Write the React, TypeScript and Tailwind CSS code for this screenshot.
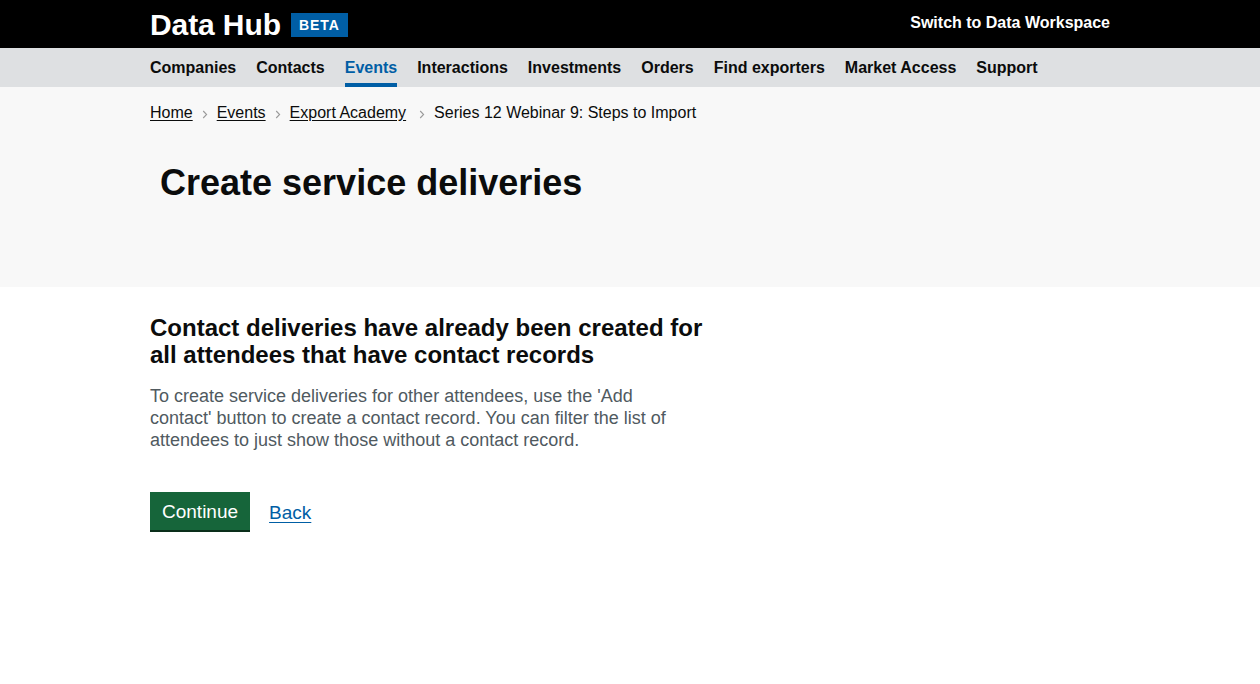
import React from "react";

const Chevron = () => (
  <svg width="6" height="9" viewBox="0 0 6 9" className="mx-[9px] mt-[2px]" aria-hidden>
    <path d="M1.2 1 L4.6 4.5 L1.2 8" fill="none" stroke="#9a9a9a" strokeWidth="1.1" />
  </svg>
);

export default function App() {
  const nav = ["Companies", "Contacts", "Events", "Interactions", "Investments", "Orders", "Find exporters", "Market Access", "Support"];
  return (
    <div className="min-h-[684px] bg-white text-[#0b0c0c]" style={{ fontFamily: '"Liberation Sans", Arial, sans-serif' }}>
      <header className="bg-black h-[48px]">
        <div className="mx-auto w-[960px] h-full flex items-center justify-between">
          <div className="flex items-center gap-[10px] mt-[1px]">
            <span className="text-white font-bold text-[30px] leading-none tracking-[-0.1px]">Data Hub</span>
            <span className="bg-[#005ea5] text-white font-bold text-[14px] leading-none tracking-[1px] px-[8px] pt-[5px] pb-[5px] h-[24px] flex items-center">BETA</span>
          </div>
          <a className="text-white font-bold text-[16px] leading-none mb-[3px]">Switch to Data Workspace</a>
        </div>
      </header>
      <nav className="bg-[#dee0e2] h-[39px]">
        <div className="mx-auto w-[960px] h-full flex gap-[20px]">
          {nav.map((n) => (
            <a
              key={n}
              className={
                n === "Events"
                  ? "text-[#005ea5] font-bold text-[16px] leading-none pt-[12px] h-full border-b-[4px] border-[#005ea5]"
                  : "text-[#0b0c0c] font-bold text-[16px] leading-none pt-[12px] h-full"
              }
            >
              {n}
            </a>
          ))}
        </div>
      </nav>
      <section className="bg-[#f8f8f8] h-[200px]">
        <div className="mx-auto w-[960px]">
          <div className="flex items-center pt-[16px] text-[16px] leading-[20px]">
            <a className="underline underline-offset-[2px]">Home</a>
            <Chevron />
            <a className="underline underline-offset-[2px]">Events</a>
            <Chevron />
            <a className="underline underline-offset-[2px]">Export Academy</a>
            <span className="ml-[4px]"><Chevron /></span>
            <span>Series 12 Webinar 9: Steps to Import</span>
          </div>
          <h1 className="pl-[10px] mt-[40px] font-bold text-[36px] leading-[40px]">Create service deliveries</h1>
        </div>
      </section>
      <main className="mx-auto w-[960px] pt-[27px]">
        <h2 className="w-[565px] font-bold text-[24px] leading-[27px]">Contact deliveries have already been created for all attendees that have contact records</h2>
        <p className="w-[540px] mt-[17px] text-[18px] leading-[22px] text-[#505a5f]">
          To create service deliveries for other attendees, use the 'Add contact' button to create a contact record. You can filter the list of attendees to just show those without a contact record.
        </p>
        <div className="flex items-center gap-[19px] mt-[41px]">
          <button className="bg-[#16653a] text-white text-[19px] leading-none h-[38px] px-[12px] shadow-[0_2px_0_#0a2e1a]">Continue</button>
          <a className="text-[#005ea5] text-[19px] leading-none underline underline-offset-[3px] mt-[3px]">Back</a>
        </div>
      </main>
    </div>
  );
}
